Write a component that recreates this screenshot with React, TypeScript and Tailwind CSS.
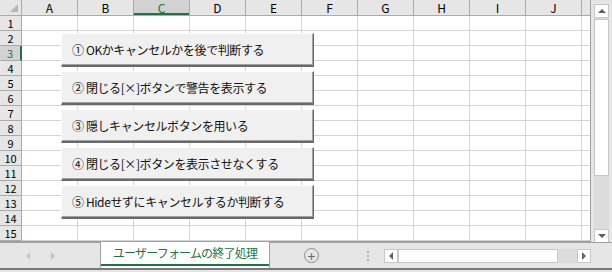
import React from 'react';

const cols = ['A', 'B', 'C', 'D', 'E', 'F', 'G', 'H', 'I', 'J'];
const rows = Array.from({ length: 15 }, (_, i) => i + 1);

const buttons = [
  '① OKかキャンセルかを後で判断する',
  '② 閉じる[×]ボタンで警告を表示する',
  '③ 隠しキャンセルボタンを用いる',
  '④ 閉じる[×]ボタンを表示させなくする',
  '⑤ Hideせずにキャンセルするか判断する',
];

const font = { fontFamily: '"Noto Sans CJK JP", "Noto Sans", sans-serif' };

function SheetGrid() {
  return (
    <div className="relative w-[591px] border-r border-b border-[#a0a0a0] bg-white">
      {/* column headers */}
      <div className="flex h-[16px] bg-[#e6e6e6] border-b border-[#ababab]">
        <div className="relative w-[22px] shrink-0 border-r border-[#ababab]">
          <div className="absolute right-[3px] bottom-[3px] w-0 h-0 border-l-[8px] border-l-transparent border-b-[8px] border-b-[#b8b8b8]" />
        </div>
        {cols.map((c) => (
          <div
            key={c}
            className={
              c === 'C'
                ? 'w-[56px] shrink-0 flex items-center justify-center border-r border-[#ababab] bg-[#d2d2d2] text-[#217346] text-[12px] leading-[15px] shadow-[inset_0_-2px_0_#217346]'
                : 'w-[56px] shrink-0 flex items-center justify-center border-r border-[#ababab] text-black text-[12px] leading-[15px]'
            }
          >
            {c}
          </div>
        ))}
        <div className="flex-1" />
      </div>
      {rows.map((r) => (
        <div key={r} className="flex h-[15px]">
          <div
            className={
              r === 3
                ? 'w-[22px] shrink-0 flex items-center justify-center bg-[#d2d2d2] text-[#217346] text-[11px] leading-none border-b border-[#ababab] border-r-2 border-r-[#217346]'
                : 'w-[22px] shrink-0 flex items-center justify-center bg-[#e6e6e6] text-black text-[11px] leading-none border-b border-r border-[#ababab]'
            }
          >
            {r}
          </div>
          {cols.map((c) => (
            <div key={c} className="w-[56px] shrink-0 border-r border-b border-[#d4d4d4]" />
          ))}
          <div className="flex-1 border-b border-[#d4d4d4]" />
        </div>
      ))}

      {/* command buttons placed on the sheet */}
      <div className="absolute left-[61px] top-[33px] flex flex-col gap-[4px]">
        {buttons.map((b) => (
          <div
            key={b}
            className="w-[253px] h-[34px] flex items-center pl-[10px] bg-[#f0f0f0] border border-t-white border-l-white border-r-[#696969] border-b-2 border-b-[#696969] shadow-[inset_-1px_-1px_0_#a0a0a0] text-[12px] text-[#111] tracking-[-0.4px]"
          >
            {b}
          </div>
        ))}
      </div>
    </div>
  );
}

function VScroll() {
  return (
    <div className="flex-1 pt-[4px] pl-[3px]">
      <div className="w-[15px] h-[239px] flex flex-col bg-[#dcdcdc]">
        <div className="h-[14px] bg-white border border-[#c6c6c6] flex items-center justify-center">
          <div className="w-0 h-0 border-x-[4px] border-x-transparent border-b-[4px] border-b-[#606060]" />
        </div>
        <div className="mt-[1px] h-[157px] bg-white border border-[#c6c6c6]" />
        <div className="flex-1" />
        <div className="h-[14px] bg-white border border-[#c6c6c6] flex items-center justify-center">
          <div className="w-0 h-0 border-x-[4px] border-x-transparent border-t-[4px] border-t-[#606060]" />
        </div>
      </div>
    </div>
  );
}

function TabBar() {
  return (
    <div className="flex h-[28px] border-b-2 border-[#7a7a7a]">
      <div className="w-[100px] flex items-center gap-[21px] pl-[26px] border-t border-[#a0a0a0]">
        <div className="w-0 h-0 border-y-[4px] border-y-transparent border-r-[4px] border-r-[#c4c4c4]" />
        <div className="w-0 h-0 border-y-[4px] border-y-transparent border-l-[4px] border-l-[#c4c4c4]" />
      </div>
      <div className="w-[170px] bg-white border-x border-[#a0a0a0] flex flex-col">
        <div className="flex-1 flex items-center justify-center text-[#217346] text-[12px] tracking-[-0.8px]">
          ユーザーフォームの終了処理
        </div>
        <div className="h-[2px] bg-[#217346] mb-[2px]" />
      </div>
      <div className="flex-1 flex items-center border-t border-[#a0a0a0]">
        <div className="ml-[34px] w-[15px] h-[15px] rounded-full border border-[#8a8a8a] flex items-center justify-center text-[#6a6a6a] text-[14px] leading-none">
          +
        </div>
        <div className="ml-[48px] flex flex-col gap-[2px]">
          <div className="w-[2px] h-[2px] bg-[#b0b0b0]" />
          <div className="w-[2px] h-[2px] bg-[#b0b0b0]" />
          <div className="w-[2px] h-[2px] bg-[#b0b0b0]" />
        </div>
        <div className="ml-[15px] w-[207px] h-[14px] flex bg-[#dcdcdc]">
          <div className="w-[14px] bg-white border border-[#c6c6c6] flex items-center justify-center">
            <div className="w-0 h-0 border-y-[4px] border-y-transparent border-r-[4px] border-r-[#606060]" />
          </div>
          <div className="w-[160px] bg-white border border-[#c6c6c6]" />
          <div className="flex-1" />
          <div className="w-[14px] bg-white border border-[#c6c6c6] flex items-center justify-center">
            <div className="w-0 h-0 border-y-[4px] border-y-transparent border-l-[4px] border-l-[#606060]" />
          </div>
        </div>
      </div>
    </div>
  );
}

export default function App() {
  return (
    <div className="w-[612px] h-[272px] bg-[#e6e6e6] overflow-hidden" style={font}>
      <div className="flex h-[242px]">
        <SheetGrid />
        <VScroll />
      </div>
      <TabBar />
    </div>
  );
}
